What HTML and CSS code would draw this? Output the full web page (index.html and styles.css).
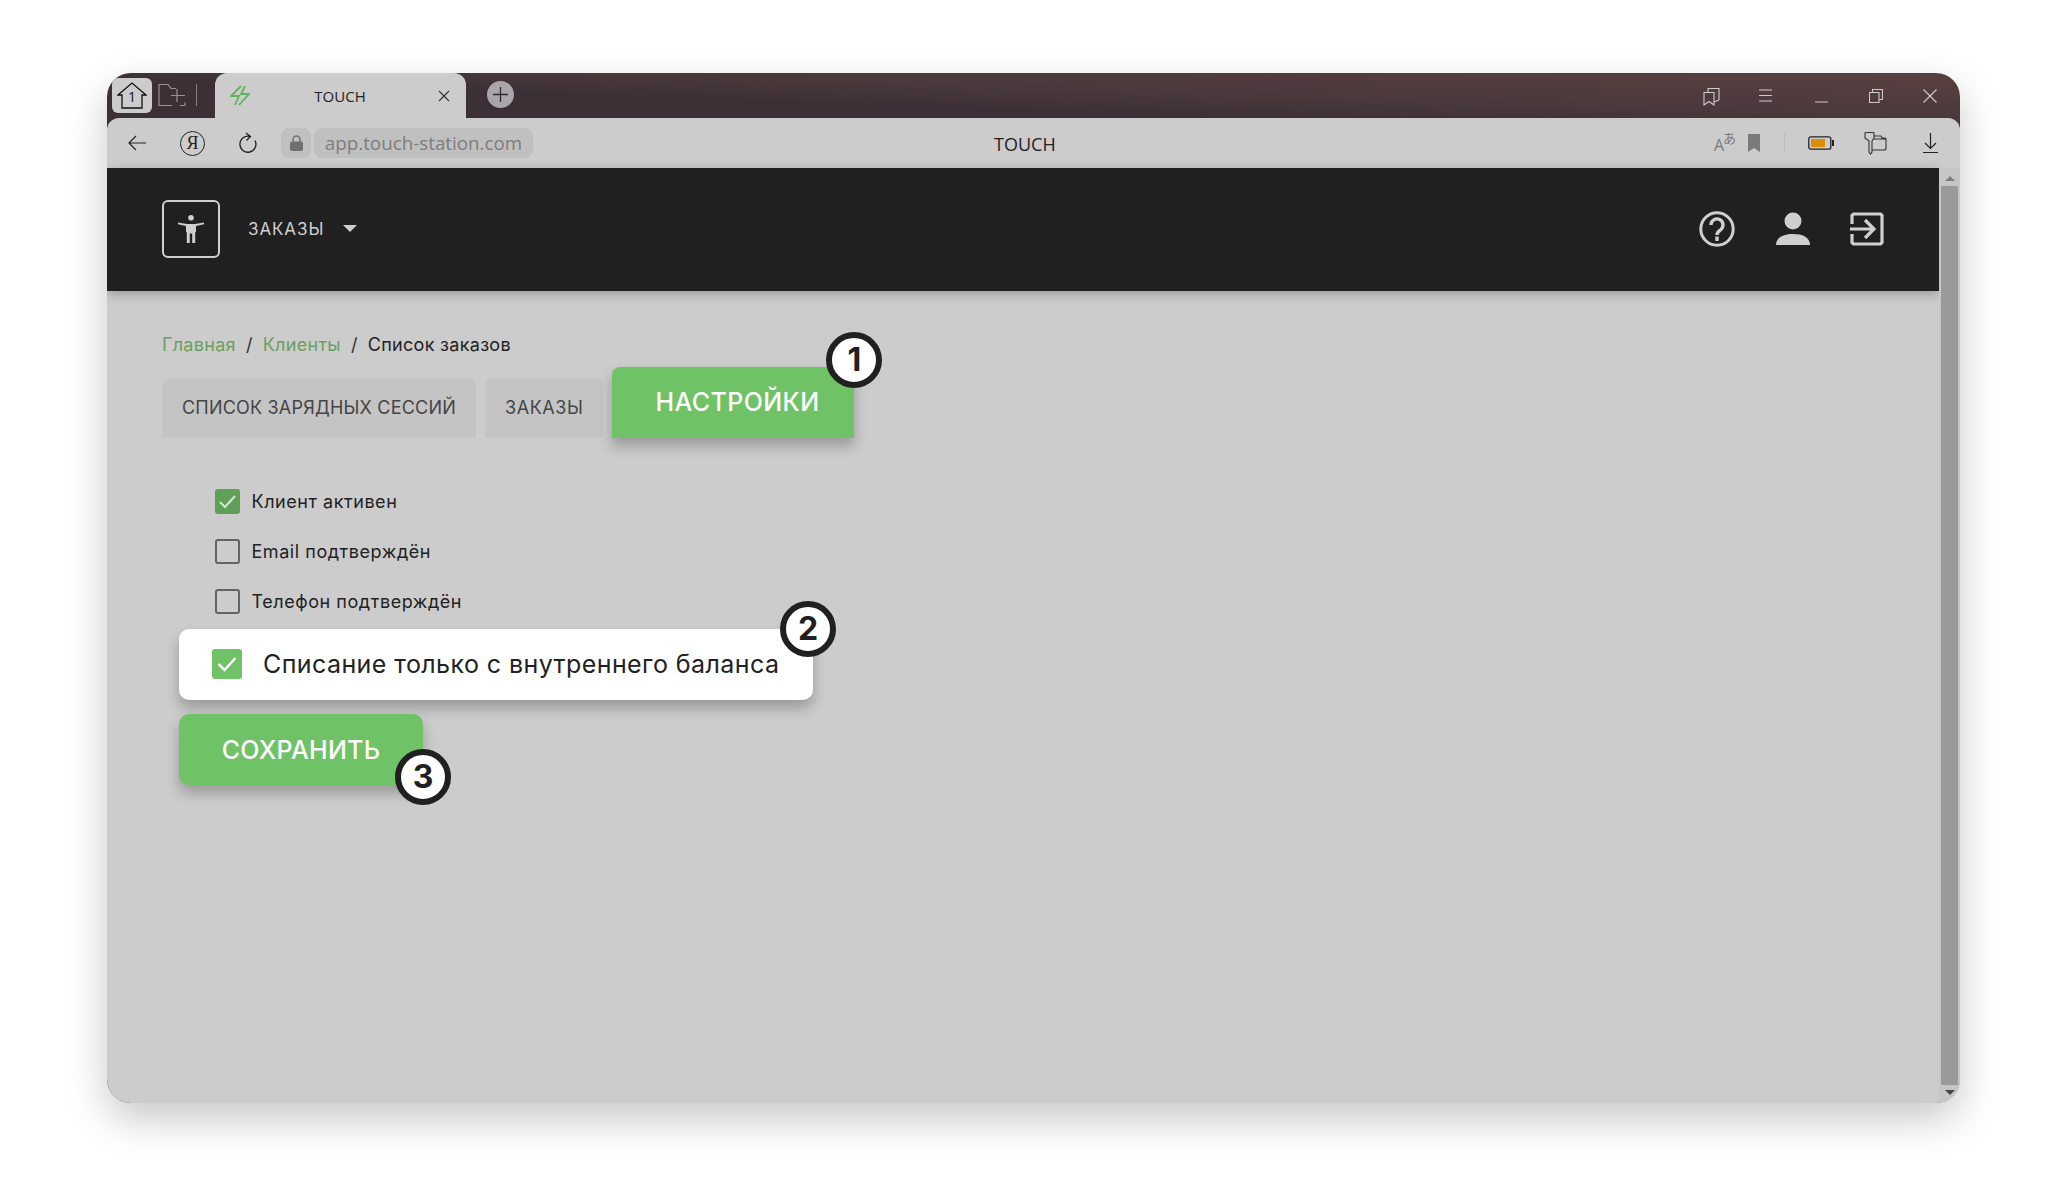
FILE: index.html
```html
<!DOCTYPE html>
<html lang="ru">
<head>
    <meta charset="UTF-8">
    <title>TOUCH</title>
    <link rel="stylesheet" href="styles.css">
</head>
<body>
    <div class="window">
        <div class="tabstrip">
            <div class="home-btn">
                <svg width="30" height="27" viewBox="0 0 30 27" fill="none" stroke="#111" stroke-width="1.3"><path d="M1 13 15 1l14 12h-4v13H5V13z"/><text x="15" y="20" class="home-num">1</text></svg>
            </div>
            <svg class="folder-icon" width="28" height="24" viewBox="0 0 28 24" fill="none" stroke="#9b9296" stroke-width="1.2"><path d="M14 22.500H1V1.500h9l3 4h5M27 22.500h-5M27 19.500v3M19 6v13M13 12.500h14"/></svg>
            <div class="strip-divider"></div>
            <div class="tab">
                <svg class="bolt" width="20" height="21" viewBox="0 0 20 21" fill="none" stroke="#63b35c" stroke-width="1.800"><path d="M11 1 1 11h8l-4 9M15 1l-4 8h8L9 20"/></svg>
                <span class="tab-title">TOUCH</span>
                <svg class="tab-close" width="12" height="12" viewBox="0 0 12 12" stroke="#333" stroke-width="1.100"><path d="M1 1l10 10M11 1 1 11"/></svg>
            </div>
            <div class="new-tab">
                <svg width="15" height="15" viewBox="0 0 15 15" stroke="#2b2b30" stroke-width="1.300"><path d="M7.500 0v15M0 7.500h15"/></svg>
            </div>
            <div class="win-controls">
                <svg width="17" height="19" viewBox="0 0 17 19" fill="none" stroke="#d0cbcb" stroke-width="1.100"><path d="M1 5.500h10v12.500l-5-3.500-5 3.500zM5 5.500V1.500h11v11.500l-5 2"/></svg>
                <svg class="ctl-menu" width="13" height="13" viewBox="0 0 13 13" stroke="#d0cbcb" stroke-width="1.100"><path d="M0 1h13M0 6.500h13M0 12h13"/></svg>
                <svg class="ctl-min" width="13" height="14" viewBox="0 0 13 14" stroke="#d0cbcb" stroke-width="1.200"><path d="M0 13h13"/></svg>
                <svg class="ctl-max" width="14" height="14" viewBox="0 0 14 14" fill="none" stroke="#d0cbcb" stroke-width="1.100"><path d="M.5 3.500h9.500v10H.5zM3.500 3.500V.5h10v10H10"/></svg>
                <svg class="ctl-close" width="14" height="14" viewBox="0 0 14 14" stroke="#d0cbcb" stroke-width="1.100"><path d="M.5.5l13 13M13.500.5l-13 13"/></svg>
            </div>
        </div>

        <div class="toolbar">
            <svg class="back" width="18" height="16" viewBox="0 0 18 16" fill="none" stroke="#222" stroke-width="1.200"><path d="M18 8H1M8 1 1 8l7 7"/></svg>
            <div class="ya-btn">Я</div>
            <svg class="reload" width="20" height="22" viewBox="0 0 20 22" fill="none" stroke="#222" stroke-width="1.300"><path d="M13 4.500a8 8 0 1 0 5 4M9 1l4.500 3.500L9.500 8.500"/></svg>
            <div class="lock-box">
                <svg width="13" height="16" viewBox="0 0 13 16"><path d="M3 7V4.500a3.500 3.500 0 0 1 7 0V7" fill="none" stroke="#707070" stroke-width="1.500"/><rect x="0" y="6.500" width="13" height="9.500" rx="2" fill="#707070"/></svg>
            </div>
            <div class="url-box">app.touch-station.com</div>
            <div class="page-title">TOUCH</div>
            <div class="translate"><span class="tr-a">A</span><span class="tr-jp">あ</span></div>
            <svg class="bookmark" width="12" height="18" viewBox="0 0 12 18"><path d="M0 0h12v18l-6-4-6 4z" fill="#7a7a7a"/></svg>
            <div class="tool-divider"></div>
            <svg class="battery" width="26" height="14" viewBox="0 0 26 14"><rect x=".8" y=".8" width="22" height="12.400" rx="2" fill="none" stroke="#222" stroke-width="1.300"/><rect x="3" y="3" width="14" height="8" fill="#d98e04"/><rect x="24" y="4" width="2" height="6" fill="#222"/></svg>
            <svg class="keyfolder" width="24" height="23" viewBox="0 0 24 23" fill="none" stroke="#333" stroke-width="1.100"><path d="M2 1.500Q2 .5 3 .5h7q1 0 1 1V6l-2 3v11l-1.500 2L6 20V9L2 6zM11 4h7l1 2h3q1 0 1 1v9q0 2-2 2H9.500M11 7h12"/></svg>
            <svg class="download" width="15" height="20" viewBox="0 0 15 20" fill="none" stroke="#222" stroke-width="1.200"><path d="M7.500 0v15M2 10l5.500 5.500L13 10M0 19.500h15"/></svg>
        </div>

        <div class="viewport">
            <div class="page">
                <header class="app-header">
                    <div class="logo">
                        <svg width="26" height="28" viewBox="0 0 26 28" fill="#cfcfcf"><circle cx="13" cy="2.800" r="2.800"/><path d="M0 7.500 9 9h8l9-1.500v1.800L18 11v5.500l-.8 1V28h-3V18.500h-2.400V28h-3V17.500l-.8-1V11L0 9.300z"/></svg>
                    </div>
                    <span class="nav-item">ЗАКАЗЫ</span>
                    <span class="caret"></span>
                    <div class="header-icons">
                        <svg width="36" height="36" viewBox="0 0 36 36" fill="none" stroke="#cfcfcf" stroke-width="3"><circle cx="18" cy="18" r="16.200"/><path d="M12 14a6 6 0 1 1 9.500 4.800C19 20.500 18 21.500 18 24" stroke-width="3.400"/><path d="M18 25.500V30" stroke-width="3.400"/></svg>
                        <svg width="34" height="34" viewBox="0 0 34 34" fill="#cfcfcf"><circle cx="17" cy="9" r="8.500"/><path d="M0 33c0-8 8-11 17-11s17 3 17 11z"/></svg>
                        <svg width="34" height="34" viewBox="0 0 34 34" fill="none" stroke="#cfcfcf" stroke-width="3.200"><path d="M2 12V3.500L3.500 2h27L32 3.500v27L30.500 32h-27L2 30.500V22M0 17h23M15 8l9 9-9 9"/></svg>
                    </div>
                </header>

                <main class="content">
                    <nav class="breadcrumb">
                        <a>Главная</a><span class="sep">/</span><a>Клиенты</a><span class="sep">/</span><span>Список заказов</span>
                    </nav>
                    <div class="tabs">
                        <div class="page-tab">СПИСОК ЗАРЯДНЫХ СЕССИЙ</div>
                        <div class="page-tab short">ЗАКАЗЫ</div>
                        <div class="page-tab active">НАСТРОЙКИ<span class="badge badge-1">1</span></div>
                    </div>
                    <div class="checks">
                        <label class="check-row"><span class="box on"><svg width="17" height="14" viewBox="0 0 17 14" fill="none" stroke="#d6e6d4" stroke-width="2"><path d="M1 7l5 5L16 1"/></svg></span>Клиент активен</label>
                        <label class="check-row"><span class="box"></span>Email подтверждён</label>
                        <label class="check-row"><span class="box"></span>Телефон подтверждён</label>
                    </div>
                    <div class="highlight">
                        <span class="box big"><svg width="20" height="16" viewBox="0 0 20 16" fill="none" stroke="#fff" stroke-width="2.500"><path d="M1.500 8l6 6L18.500 2"/></svg></span>
                        <span>Списание только с внутреннего баланса</span>
                        <span class="badge badge-2">2</span>
                    </div>
                    <button class="save-btn">СОХРАНИТЬ<span class="badge badge-3">3</span></button>
                </main>
            </div>
            <div class="scrollbar">
                <span class="arrow up"></span>
                <div class="thumb"></div>
                <span class="arrow down"></span>
            </div>
        </div>
    </div>
</body>
</html>
```

FILE: styles.css
```css
* {
    box-sizing: border-box;
}
body {
    margin: 0;
    height: 1177px;
    overflow: hidden;
    background-color: #fff;
    font-family: "Inter", "Noto Sans", sans-serif;
}
.window {
    width: 1853px;
    height: 1030px;
    margin: 73px 0 0 107px;
    border-radius: 24px;
    overflow: hidden;
    display: flex;
    flex-direction: column;
    background: linear-gradient(182deg, #5a4040 0, #4a393c 45px, #3c3036 70px, #3c3036 110px);
    box-shadow: 0 16px 40px rgba(0, 0, 0, .22);
}

/* browser chrome */
.tabstrip {
    height: 45px;
    flex: none;
    display: flex;
    align-items: flex-start;
}
.home-btn {
    width: 40px;
    height: 35px;
    margin: 5px 0 0 5px;
    background: #ccc;
    border-radius: 6px;
    display: flex;
    align-items: center;
    justify-content: center;
}
.home-num {
    font-family: "Open Sans", sans-serif;
    font-size: 14px;
    text-anchor: middle;
    fill: #111;
    stroke: none;
}
.folder-icon {
    margin: 10px 0 0 6px;
}
.strip-divider {
    width: 1px;
    height: 22px;
    margin: 11px 0 0 10px;
    background: #8a8084;
}
.tab {
    width: 251px;
    height: 45px;
    margin-left: 18px;
    background: #ccc;
    border-radius: 12px 12px 0 0;
    display: flex;
    align-items: center;
    padding: 0 16px 0 15px;
}
.tab-title {
    flex: 1;
    text-align: center;
    font-family: "Open Sans", sans-serif;
    font-size: 15px;
    color: #222;
    padding-right: 8px;
}
.new-tab {
    width: 27px;
    height: 27px;
    margin: 8px 0 0 21px;
    border-radius: 50%;
    background: #a8a6aa;
    display: flex;
    align-items: center;
    justify-content: center;
}
.win-controls {
    margin-left: auto;
    padding: 14px 23px 0 0;
    display: flex;
    align-items: flex-start;
}
.ctl-menu {
    margin: 2px 0 0 39px;
}
.ctl-min {
    margin: 2px 0 0 43px;
}
.ctl-max {
    margin: 2px 0 0 41px;
}
.ctl-close {
    margin: 2px 0 0 40px;
}
.toolbar {
    height: 50px;
    flex: none;
    display: flex;
    align-items: center;
    background: #ccc;
    border-radius: 12px 12px 0 0;
}
.back {
    margin-left: 21px;
}
.ya-btn {
    width: 25px;
    height: 25px;
    margin-left: 34px;
    border: 1.300px solid #222;
    border-radius: 50%;
    font-family: "Liberation Serif", serif;
    font-size: 18px;
    color: #222;
    display: flex;
    align-items: center;
    justify-content: center;
}
.reload {
    margin-left: 32px;
}
.lock-box {
    width: 30px;
    height: 30px;
    margin-left: 24px;
    background: #c0c0c0;
    border-radius: 8px;
    display: flex;
    align-items: center;
    justify-content: center;
}
.url-box {
    width: 219px;
    height: 30px;
    margin-left: 3px;
    background: #c0c0c0;
    border-radius: 8px;
    color: #7d7d7d;
    font-family: "Open Sans", sans-serif;
    font-size: 18.800px;
    line-height: 31px;
    text-align: center;
    white-space: nowrap;
}
.page-title {
    margin-left: 461px;
    padding-top: 2px;
    font-family: "Open Sans", sans-serif;
    font-size: 18px;
    color: #222;
}
.translate {
    margin-left: auto;
    width: 21px;
    height: 20px;
    position: relative;
    color: #7a7a7a;
    font-family: "Open Sans", "Noto Sans CJK JP", sans-serif;
}
.tr-a {
    position: absolute;
    left: 0;
    bottom: -3px;
    font-size: 16px;
}
.tr-jp {
    position: absolute;
    right: -1px;
    top: -5px;
    font-size: 13px;
    font-family: "Noto Sans CJK JP", sans-serif;
}
.bookmark {
    margin-left: 13px;
}
.tool-divider {
    width: 1px;
    height: 20px;
    margin-left: 24px;
    background: #bcbcbc;
}
.battery {
    margin-left: 23px;
}
.keyfolder {
    margin-left: 29px;
}
.download {
    margin: 0 22px 0 36px;
}

/* page */
.viewport {
    flex: 1;
    display: flex;
    min-height: 0;
    background: #ccc;
}
.page {
    flex: 1;
    display: flex;
    flex-direction: column;
}
.app-header {
    height: 123px;
    flex: none;
    background: #202020;
    box-shadow: 0 3px 10px rgba(0, 0, 0, .25);
    display: flex;
    align-items: center;
    padding: 0 55px 2px 55px;
}
.logo {
    width: 58px;
    height: 58px;
    border: 2.500px solid #cfcfcf;
    border-radius: 6px;
    display: flex;
    align-items: center;
    justify-content: center;
}
.nav-item {
    margin-left: 28px;
    font-size: 17px;
    letter-spacing: .9px;
    color: #cfcfcf;
}
.caret {
    margin-left: 19px;
    border-left: 7px solid transparent;
    border-right: 7px solid transparent;
    border-top: 7px solid #cfcfcf;
}
.header-icons {
    margin-left: auto;
    display: flex;
    align-items: center;
    gap: 40.500px;
}
.content {
    flex: 1;
    padding: 45px 0 0 55px;
}
.breadcrumb {
    font-size: 18px;
    letter-spacing: .3px;
    line-height: 18px;
    color: #222;
    white-space: nowrap;
}
.breadcrumb a {
    color: #6a9f62;
}
.sep {
    margin: 0 10px;
    color: #333;
}
.tabs {
    display: flex;
    align-items: flex-end;
    gap: 9px;
    margin-top: 13px;
}
.page-tab {
    height: 60px;
    padding: 0 20px;
    background: #c4c4c4;
    border-radius: 8px 8px 0 0;
    color: #444;
    font-size: 18px;
    letter-spacing: .2px;
    line-height: 60px;
    white-space: nowrap;
}
.page-tab.short {
    padding-right: 19px;
    letter-spacing: .6px;
}
.page-tab.active {
    position: relative;
    height: 71px;
    padding: 0 35px 0 44px;
    background: #6fc266;
    color: #fff;
    font-size: 25px;
    font-weight: 500;
    letter-spacing: .4px;
    line-height: 71px;
    box-shadow: 0 8px 14px rgba(0, 0, 0, .25);
}
.badge {
    position: absolute;
    width: 56px;
    height: 56px;
    border: 6px solid #202020;
    border-radius: 50%;
    background: #fff;
    color: #202020;
    font-size: 32px;
    font-weight: 700;
    letter-spacing: 0;
    line-height: 44px;
    text-align: center;
}
.badge-1 {
    right: -28px;
    top: -35px;
}
.checks {
    display: flex;
    flex-direction: column;
    gap: 25px;
    margin: 51px 0 0 52.500px;
}
.check-row {
    display: flex;
    align-items: center;
    height: 25px;
    font-size: 18px;
    letter-spacing: .55px;
    color: #222;
    white-space: nowrap;
}
.box {
    width: 25px;
    height: 25px;
    margin-right: 12px;
    border: 2px solid #636363;
    border-radius: 3px;
    display: flex;
    align-items: center;
    justify-content: center;
}
.box.on {
    border: 0;
    background: #5ea058;
}
.box.big {
    width: 30px;
    height: 30px;
    margin-right: 21px;
    border: 0;
    background: #6fc266;
}
.highlight {
    position: relative;
    display: flex;
    align-items: center;
    width: 634px;
    height: 71px;
    margin: 15px 0 0 17px;
    padding: 0 0 1px 33px;
    background: #fff;
    border-radius: 10px;
    box-shadow: 0 8px 14px rgba(0, 0, 0, .25);
    font-size: 25px;
    letter-spacing: .42px;
    color: #222;
    white-space: nowrap;
}
.badge-2 {
    right: -23px;
    top: -28px;
}
.save-btn {
    position: relative;
    display: block;
    width: 244px;
    height: 71px;
    margin: 14px 0 0 17px;
    padding: 0;
    border: 0;
    border-radius: 10px;
    background: #6fc266;
    box-shadow: 0 8px 14px rgba(0, 0, 0, .25);
    color: #fff;
    font-family: inherit;
    font-size: 25px;
    font-weight: 500;
    letter-spacing: .3px;
}
.badge-3 {
    right: -28px;
    top: 35px;
}
.scrollbar {
    width: 21px;
    flex: none;
    background: #c6c6c6;
    display: flex;
    flex-direction: column;
    align-items: center;
    padding: 8px 0;
}
.thumb {
    width: 17px;
    flex: 1;
    margin: 5px 0;
    background: #9a9a9a;
}
.arrow {
    border-left: 5px solid transparent;
    border-right: 5px solid transparent;
}
.arrow.up {
    border-bottom: 5px solid #7f7f7f;
}
.arrow.down {
    border-top: 5px solid #444;
}
```
